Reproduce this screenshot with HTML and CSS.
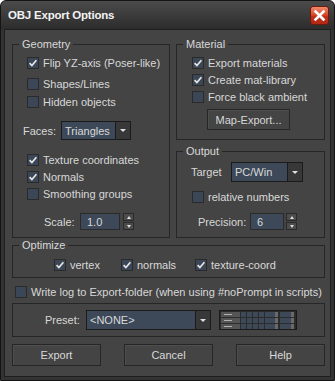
FILE: index.html
```html
<!DOCTYPE html>
<html>
<head>
<meta charset="utf-8">
<title>OBJ Export Options</title>
<link rel="stylesheet" href="styles.css">
</head>
<body>
<div class="window">
  <div class="titlebar">
    <span class="title">OBJ Export Options</span>
    <span class="close"><svg width="17" height="17" viewBox="0 0 17 17"><path d="M4.5 4.5 L12.5 12.5 M12.5 4.5 L4.5 12.5" stroke="#ffffff" stroke-width="2.6" stroke-linecap="square"/></svg></span>
  </div>
  <div class="client">
    <div class="top">
      <fieldset class="group geom">
        <legend>Geometry</legend>
        <div class="row cbrow pl14 mt3"><span class="box"><svg width="10" height="10" viewBox="0 0 10 10"><path d="M1.6 5.2 L3.9 7.5 L8.4 2.2" stroke="#e6e6e6" stroke-width="1.7" fill="none"/></svg></span>Flip YZ-axis (Poser-like)</div>
        <div class="row cbrow pl14 mt4"><span class="box"></span>Shapes/Lines</div>
        <div class="row cbrow pl14 mt1"><span class="box"></span>Hidden objects</div>
        <div class="row pl10 mt11 h19">
          <span class="lbl w38">Faces:</span>
          <span class="dd w70 h19"><span class="val">Triangles</span><span class="arr"></span></span>
        </div>
        <div class="row cbrow pl14 mt11"><span class="box"><svg width="10" height="10" viewBox="0 0 10 10"><path d="M1.6 5.2 L3.9 7.5 L8.4 2.2" stroke="#e6e6e6" stroke-width="1.7" fill="none"/></svg></span>Texture coordinates</div>
        <div class="row cbrow pl14"><span class="box"><svg width="10" height="10" viewBox="0 0 10 10"><path d="M1.6 5.2 L3.9 7.5 L8.4 2.2" stroke="#e6e6e6" stroke-width="1.7" fill="none"/></svg></span>Normals</div>
        <div class="row cbrow pl14"><span class="box"></span>Smoothing groups</div>
        <div class="row pl31 mt11">
          <span class="lbl w36">Scale:</span>
          <span class="field w40">1.0</span>
          <span class="spinner"><span class="up"></span><span class="down"></span></span>
        </div>
        <div class="pb7"></div>
      </fieldset>
      <div class="rightcol">
        <fieldset class="group mat">
          <legend>Material</legend>
          <div class="row cbrow pl15 mt3"><span class="box"><svg width="10" height="10" viewBox="0 0 10 10"><path d="M1.6 5.2 L3.9 7.5 L8.4 2.2" stroke="#e6e6e6" stroke-width="1.7" fill="none"/></svg></span>Export materials</div>
          <div class="row cbrow pl15"><span class="box"><svg width="10" height="10" viewBox="0 0 10 10"><path d="M1.6 5.2 L3.9 7.5 L8.4 2.2" stroke="#e6e6e6" stroke-width="1.7" fill="none"/></svg></span>Create mat-library</div>
          <div class="row cbrow pl15"><span class="box"></span>Force black ambient</div>
          <div class="btnrow"><button class="btn mapbtn">Map-Export...</button></div>
        </fieldset>
        <fieldset class="group out">
          <legend>Output</legend>
          <div class="row pl14 mt4 h20">
            <span class="lbl w40">Target</span>
            <span class="dd w72 h20"><span class="val">PC/Win</span><span class="arr"></span></span>
          </div>
          <div class="row cbrow pl15 mt6"><span class="box"></span>relative numbers</div>
          <div class="row pl21 mt8">
            <span class="lbl w52">Precision:</span>
            <span class="field w34">6</span>
            <span class="spinner sp2"><span class="up"></span><span class="down"></span></span>
          </div>
          <div class="pb7"></div>
        </fieldset>
      </div>
    </div>

    <fieldset class="group opt">
      <legend>Optimize</legend>
      <div class="row pl41 mt4">
        <span class="cb w67"><span class="box"><svg width="10" height="10" viewBox="0 0 10 10"><path d="M1.6 5.2 L3.9 7.5 L8.4 2.2" stroke="#e6e6e6" stroke-width="1.7" fill="none"/></svg></span>vertex</span>
        <span class="cb w74"><span class="box"><svg width="10" height="10" viewBox="0 0 10 10"><path d="M1.6 5.2 L3.9 7.5 L8.4 2.2" stroke="#e6e6e6" stroke-width="1.7" fill="none"/></svg></span>normals</span>
        <span class="cb"><span class="box"><svg width="10" height="10" viewBox="0 0 10 10"><path d="M1.6 5.2 L3.9 7.5 L8.4 2.2" stroke="#e6e6e6" stroke-width="1.7" fill="none"/></svg></span>texture-coord</span>
      </div>
      <div class="pb4"></div>
    </fieldset>

    <div class="row cbrow pl3 mt5 log"><span class="box"></span>Write log to Export-folder (when using #noPrompt in scripts)</div>

    <div class="preset">
      <span class="lbl w41">Preset:</span>
      <span class="dd w125 h20"><span class="val">&lt;NONE&gt;</span><span class="arr"></span></span>
      <svg class="strip" width="78" height="20" viewBox="0 0 78 20">
        <rect x="0.5" y="0.5" width="77" height="19" fill="#2c2c2c" stroke="#1a1a1a"/>
        <g>
          <rect x="2" y="2" width="19" height="5" fill="#555"/><line x1="5" y1="4.5" x2="13" y2="4.5" stroke="#b0b0b0"/>
          <rect x="22" y="2" width="5" height="5" fill="#3d4959"/><rect x="28" y="2" width="5" height="5" fill="#3d4959"/><rect x="34" y="2" width="5" height="5" fill="#3d4959"/><rect x="40" y="2" width="5" height="5" fill="#3d4959"/>
          <rect x="46" y="2" width="13" height="5" fill="#3d4959"/><rect x="56" y="2" width="3" height="5" fill="#6a6a6a"/>
          <rect x="61" y="2" width="14" height="5" fill="#3d4959"/><rect x="72" y="2" width="3" height="5" fill="#6a6a6a"/>
        </g>
        <g>
          <rect x="2" y="8" width="19" height="5" fill="#555"/><line x1="5" y1="10.5" x2="13" y2="10.5" stroke="#b0b0b0"/>
          <rect x="22" y="8" width="5" height="5" fill="#3d4959"/><rect x="28" y="8" width="5" height="5" fill="#3d4959"/><rect x="34" y="8" width="5" height="5" fill="#3d4959"/><rect x="40" y="8" width="5" height="5" fill="#3d4959"/>
          <rect x="46" y="8" width="13" height="5" fill="#3d4959"/><rect x="56" y="8" width="3" height="5" fill="#6a6a6a"/>
          <rect x="61" y="8" width="14" height="5" fill="#3d4959"/><rect x="72" y="8" width="3" height="5" fill="#6a6a6a"/>
        </g>
        <g>
          <rect x="2" y="14" width="19" height="5" fill="#555"/><line x1="5" y1="16.5" x2="13" y2="16.5" stroke="#b0b0b0"/>
          <rect x="22" y="14" width="5" height="5" fill="#3d4959"/><rect x="28" y="14" width="5" height="5" fill="#3d4959"/><rect x="34" y="14" width="5" height="5" fill="#3d4959"/><rect x="40" y="14" width="5" height="5" fill="#3d4959"/>
          <rect x="46" y="14" width="13" height="5" fill="#3d4959"/><rect x="56" y="14" width="3" height="5" fill="#6a6a6a"/>
          <rect x="61" y="14" width="14" height="5" fill="#3d4959"/><rect x="72" y="14" width="3" height="5" fill="#6a6a6a"/>
        </g>
      </svg>
    </div>

    <div class="buttons">
      <button class="btn big">Export</button>
      <button class="btn big">Cancel</button>
      <button class="btn big">Help</button>
    </div>
  </div>
</div>
</body>
</html>
```

FILE: styles.css
```css
* { box-sizing: border-box; }
html, body { margin: 0; padding: 0; background: #ffffff; }
body {
  font-family: "Liberation Sans", Arial, sans-serif;
  font-size: 11px;
  color: #d8d8d8;
}
.window {
  width: 335px;
  height: 381px;
  border: 1px solid #141414;
  border-radius: 6px 6px 0 0;
  background: linear-gradient(#4b4b4b, #2c2c2c 28px, #333333 28px);
  padding: 0 3px 3px;
  display: flex;
  flex-direction: column;
}
.titlebar {
  height: 28px;
  margin: 0 -3px;
  padding-left: 7px;
  display: flex;
  align-items: center;
}
.title {
  font-weight: bold;
  font-size: 11.5px;
  color: #f2f2f2;
  letter-spacing: -0.2px;
}
.close {
  margin-left: auto;
  margin-right: 5px;
  width: 19px;
  height: 19px;
  border: 1px solid #6e1b0e;
  border-radius: 3px;
  background: linear-gradient(#f08a6e, #dd4a2c 45%, #c0301a 55%, #b02814);
  display: flex;
  align-items: center;
  justify-content: center;
}
.client {
  flex: 1;
  border: 1px solid #1e1e1e;
  background: #444444;
  padding: 7px 5px 0 7px;
}
.top {
  display: grid;
  grid-template-columns: 158px 149px;
  column-gap: 6px;
  align-items: start;
}
.rightcol {
  display: flex;
  flex-direction: column;
  gap: 4px;
}
fieldset.group {
  margin: 0;
  padding: 0;
  min-width: 0;
  border: 1px solid #262626;
}
legend {
  margin-left: 6px;
  padding: 0 3px;
  height: 14px;
  line-height: 14px;
}
.row {
  display: flex;
  align-items: center;
  height: 17px;
  white-space: nowrap;
}
.cb { display: flex; align-items: center; }
.box {
  width: 12px;
  height: 12px;
  flex: none;
  border: 1px solid #2a2a2a;
  background: #3b4656;
  margin-right: 4px;
  display: flex;
  align-items: center;
  justify-content: center;
}
.lbl { flex: none; }
.w36 { width: 36px; }
.w38 { width: 38px; }
.w40 { width: 40px; }
.w41 { width: 41px; }
.w52 { width: 52px; }
.w67 { width: 67px; }
.w74 { width: 74px; }
.w34 { width: 34px; }
.w70 { width: 70px; }
.w72 { width: 72px; }
.w125 { width: 125px; }
.h19 { height: 19px; }
.h20 { height: 20px; }
.pl3 { padding-left: 3px; }
.pl10 { padding-left: 10px; }
.pl14 { padding-left: 14px; }
.pl15 { padding-left: 15px; }
.pl21 { padding-left: 21px; }
.pl31 { padding-left: 31px; }
.pl41 { padding-left: 41px; }
.mt1 { margin-top: 1px; }
.mt3 { margin-top: 3px; }
.mt4 { margin-top: 4px; }
.mt5 { margin-top: 5px; }
.mt6 { margin-top: 6px; }
.mt8 { margin-top: 8px; }
.mt11 { margin-top: 11px; }
.pb7 { height: 7px; }
.pb4 { height: 4px; }

.dd {
  display: flex;
  flex: none;
  border: 1px solid #1b1b1b;
  background: #3d4959;
}
.dd .val {
  flex: 1;
  padding-left: 3px;
  display: flex;
  align-items: center;
}
.dd .arr {
  width: 15px;
  border-left: 1px solid #1b1b1b;
  background: #383838;
  display: flex;
  align-items: center;
  justify-content: center;
}
.dd .arr::after {
  content: "";
  border-left: 3px solid transparent;
  border-right: 3px solid transparent;
  border-top: 3px solid #e0e0e0;
}
.field {
  flex: none;
  height: 17px;
  border: 1px solid #2a2a2a;
  background: #3d4959;
  padding-left: 6px;
  display: flex;
  align-items: center;
}
.spinner {
  flex: none;
  width: 11px;
  height: 17px;
  margin-left: 3px;
  display: flex;
  flex-direction: column;
  gap: 1px;
}
.spinner.sp2 { margin-left: 2px; }
.spinner span {
  flex: 1;
  background: #4c4c4c;
  border: 1px solid #2a2a2a;
  display: flex;
  align-items: center;
  justify-content: center;
}
.spinner .up::after {
  content: "";
  border-left: 2.5px solid transparent;
  border-right: 2.5px solid transparent;
  border-bottom: 3px solid #dcdcdc;
}
.spinner .down::after {
  content: "";
  border-left: 2.5px solid transparent;
  border-right: 2.5px solid transparent;
  border-top: 3px solid #dcdcdc;
}
.btn {
  font-family: "Liberation Sans", Arial, sans-serif;
  font-size: 11px;
  color: #d8d8d8;
  background: #444444;
  border: 1px solid #262626;
  box-shadow: inset 1px 1px 0 #4e4e4e;
  padding: 0;
  margin: 0;
}
.btnrow {
  margin-top: 4px;
  padding-left: 30px;
  padding-bottom: 9px;
}
.mapbtn {
  width: 83px;
  height: 21px;
  display: block;
}
.opt { margin-top: 4px; }
.preset {
  margin-top: 3px;
  border: 1px solid #262626;
  padding: 6px 0 6px 32px;
  display: flex;
  align-items: center;
}
.strip { margin-left: 8px; display: block; }
.buttons {
  margin-top: 7px;
  display: flex;
  justify-content: space-between;
}
.big {
  width: 89px;
  height: 22px;
}
```
